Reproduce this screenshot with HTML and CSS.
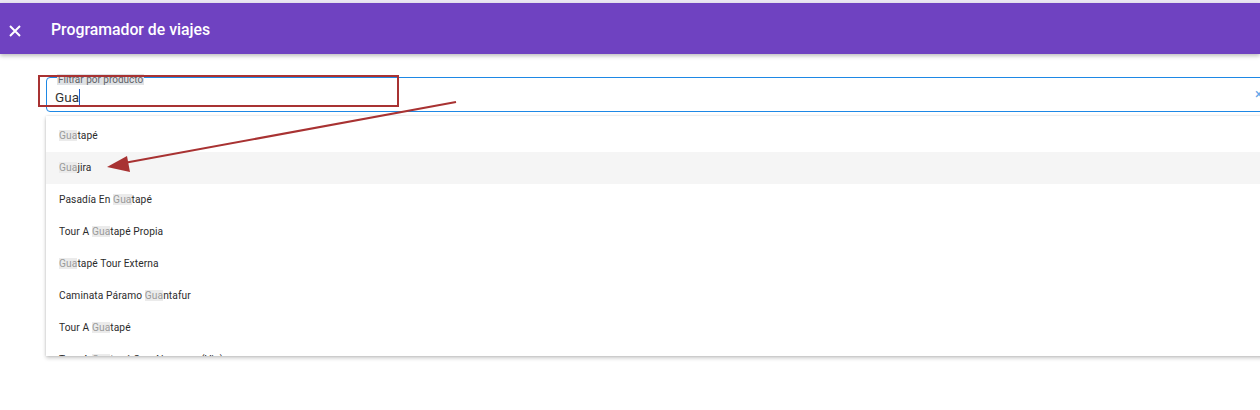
FILE: index.html
```html
<!DOCTYPE html>
<html lang="es">
<head>
<meta charset="utf-8">
<title>Programador de viajes</title>
<link rel="stylesheet" href="styles.css">
</head>
<body>
<div class="topline"></div>
<header class="appbar">
  <svg class="close" width="12" height="12" viewBox="0 0 12 12"><path d="M1 1L11 11M11 1L1 11" stroke="#fff" stroke-width="2" fill="none"/></svg>
  <h1 class="title">Programador de viajes</h1>
</header>
<main class="content">
  <div class="field">
    <span class="label">Filtrar por producto</span>
    <div class="value">Gua<span class="caret"></span></div>
    <span class="clear">×</span>
  </div>
  <ul class="options">
    <li class="opt"><mark>Gua</mark>tapé</li>
    <li class="opt active"><mark>Gua</mark>jira</li>
    <li class="opt">Pasadía En <mark>Gua</mark>tapé</li>
    <li class="opt">Tour A <mark>Gua</mark>tapé Propia</li>
    <li class="opt"><mark>Gua</mark>tapé Tour Externa</li>
    <li class="opt">Caminata Páramo <mark>Gua</mark>ntafur</li>
    <li class="opt">Tour A <mark>Gua</mark>tapé</li>
    <li class="opt">Tour A <mark>Gua</mark>tapé Con Almuerzo (Vip)</li>
  </ul>
</main>
<div class="annot-box"></div>
<svg class="annot-arrow" width="1260" height="410" viewBox="0 0 1260 410">
  <line x1="456" y1="102" x2="124" y2="163" stroke="#a83232" stroke-width="2"/>
  <polygon points="107,167 127,156 130,172" fill="#a83232"/>
</svg>
</body>
</html>
```
FILE: styles.css
```css
html, body {
  margin: 0;
  padding: 0;
  width: 1260px;
  height: 410px;
  overflow: hidden;
  background: #fff;
  font-family: Roboto, "Liberation Sans", sans-serif;
}
.topline {
  height: 3px;
  background: #ebe7f3;
}
.appbar {
  height: 51px;
  background: #6f42c1;
  display: flex;
  align-items: center;
  box-shadow: 0 2px 4px rgba(0,0,0,0.25);
  position: relative;
  z-index: 2;
}
.close {
  margin-left: 9px;
  margin-top: 4px;
}
.title {
  margin: 0 0 0 30px;
  color: #fff;
  font-size: 15.8px;
  font-weight: 500;
  padding-top: 2px;
}
.content {
  padding: 23px 0 0 46px;
}
.field {
  position: relative;
  width: 1240px;
  height: 33px;
  border: 1px solid #1e88e5;
  border-radius: 4px;
  box-sizing: content-box;
}
.label {
  position: absolute;
  left: 10px;
  top: -4px;
  font-size: 10px;
  line-height: 11px;
  color: #5f6368;
  background: #dfe2e5;
  padding: 0 1px;
}
.value {
  padding: 11px 0 0 8px;
  font-size: 13.5px;
  line-height: 16px;
  color: #333;
  display: flex;
  align-items: center;
}
.caret {
  display: inline-block;
  width: 1px;
  height: 16px;
  background: #1a5fd0;
}
.clear {
  position: absolute;
  left: 1208px;
  top: 8px;
  color: #64a6e8;
  font-size: 14px;
}
.options {
  list-style: none;
  margin: 4px 0 0 0;
  padding: 4px 0 0 0;
  width: 1240px;
  height: 236px;
  overflow: hidden;
  background: #fff;
  box-shadow: 0 2px 4px rgba(0,0,0,0.22), 0 0 2px rgba(0,0,0,0.12);
}
.opt {
  height: 32px;
  line-height: 32px;
  padding-left: 13px;
  font-size: 10.2px;
  color: #2b2b2b;
  letter-spacing: 0.1px;
  white-space: nowrap;
}
.opt.active {
  background: #f5f5f5;
}
mark {
  background: #ebebeb;
  color: #9a9a9a;
}
.annot-box {
  position: absolute;
  left: 38px;
  top: 75px;
  width: 357px;
  height: 28px;
  border: 2px solid #a83232;
  z-index: 3;
}
.annot-arrow {
  position: absolute;
  left: 0;
  top: 0;
  z-index: 4;
  pointer-events: none;
}
```
